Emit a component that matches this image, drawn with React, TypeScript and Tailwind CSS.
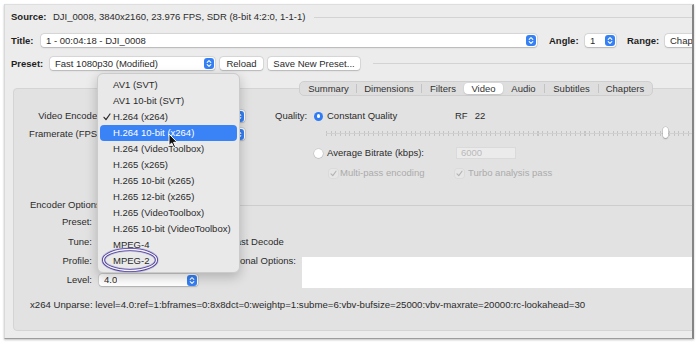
import React from "react";

function Stepper() {
  return (
    <span className="flex h-[11px] w-[10px] shrink-0 items-center justify-center rounded-[3px] bg-[#3580f5]">
      <svg width="6" height="9" viewBox="0 0 6 9" fill="none">
        <path
          d="M1.2 3.4 L3 1.6 L4.8 3.4 M1.2 5.6 L3 7.4 L4.8 5.6"
          stroke="#ffffff"
          strokeWidth="1.1"
          strokeLinecap="round"
          strokeLinejoin="round"
        />
      </svg>
    </span>
  );
}

function Popup({ text, className }: { text: string; className: string }) {
  return (
    <div
      className={
        "flex shrink-0 items-center justify-between rounded-[3px] bg-white pl-[5px] pr-[1px] shadow-[0_0_0_0.5px_rgba(0,0,0,0.12),0_0.5px_1.5px_rgba(0,0,0,0.18)] " +
        className
      }
    >
      <span className="truncate leading-[12px]">{text}</span>
      <Stepper />
    </div>
  );
}

function Btn({ text, className }: { text: string; className: string }) {
  return (
    <div
      className={
        "flex h-[13px] shrink-0 items-center justify-center rounded-[3px] bg-white shadow-[0_0_0_0.5px_rgba(0,0,0,0.12),0_0.5px_1.5px_rgba(0,0,0,0.18)] " +
        className
      }
    >
      {text}
    </div>
  );
}

function RadioOn() {
  return (
    <span className="flex h-[9px] w-[9px] shrink-0 items-center justify-center rounded-full bg-[#2f7cf6]">
      <span className="h-[3.5px] w-[3.5px] rounded-full bg-white" />
    </span>
  );
}

function RadioOff() {
  return (
    <span className="h-[9px] w-[9px] shrink-0 rounded-full bg-white shadow-[0_0_0_0.5px_rgba(0,0,0,0.15),0_0.5px_1px_rgba(0,0,0,0.15)]" />
  );
}

function CheckDisabled() {
  return (
    <span className="flex h-[9px] w-[9px] shrink-0 items-center justify-center rounded-[2px] bg-[#e6e6e6] shadow-[0_0_0_0.5px_rgba(0,0,0,0.06)]">
      <svg width="7" height="7" viewBox="0 0 7 7" fill="none">
        <path d="M1 3.8 L2.8 5.6 L6 1.2" stroke="#b3b3b3" strokeWidth="1.1" strokeLinecap="round" strokeLinejoin="round" />
      </svg>
    </span>
  );
}

function CheckBox() {
  return <span className="block h-[10px] w-[10px] shrink-0 rounded-[2px] bg-white shadow-[0_0_0_0.5px_rgba(0,0,0,0.2)]" />;
}

const menuItems = [
  "AV1 (SVT)",
  "AV1 10-bit (SVT)",
  "H.264 (x264)",
  "H.264 10-bit (x264)",
  "H.264 (VideoToolbox)",
  "H.265 (x265)",
  "H.265 10-bit (x265)",
  "H.265 12-bit (x265)",
  "H.265 (VideoToolbox)",
  "H.265 10-bit (VideoToolbox)",
  "MPEG-4",
  "MPEG-2",
];

export default function App() {
  return (
    <div className="h-[344px] w-[700px] overflow-hidden bg-white pl-[4px] pt-[4px] font-['Liberation_Sans',Arial,sans-serif] text-[9.5px] leading-none text-[#2b2b2b]">
      <div className="relative flex h-[335px] w-[690px] flex-col overflow-hidden border-b border-l border-r-2 border-t border-b-[#9c9c9c] border-l-[#d9d9d9] border-r-[#858585] border-t-[#dedede] bg-[#ececec] shadow-[0_1px_2px_rgba(0,0,0,0.25)]">
        {/* Source */}
        <div className="mt-[6px] flex h-[12px] shrink-0 items-center pl-[6px]">
          <span className="w-[42px] shrink-0 font-bold text-[#1e1e1e]">Source:</span>
          <span className="shrink-0 leading-[12px]">DJI_0008, 3840x2160, 23.976 FPS, SDR (8-bit 4:2:0, 1-1-1)</span>
          <span className="ml-[9px] h-px flex-1 bg-[#d3d3d3]" />
        </div>

        {/* Title */}
        <div className="mt-[11px] flex h-[13px] shrink-0 items-center pl-[6px]">
          <span className="w-[30px] shrink-0 font-bold text-[#1e1e1e]">Title:</span>
          <Popup text="1 - 00:04:18 - DJI_0008" className="h-[13px] w-[496px]" />
          <span className="ml-[12px] w-[36px] shrink-0 font-bold text-[#1e1e1e]">Angle:</span>
          <Popup text="1" className="h-[13px] w-[31px]" />
          <span className="ml-[11px] w-[38px] shrink-0 font-bold text-[#1e1e1e]">Range:</span>
          <div className="flex h-[13px] w-[60px] shrink-0 items-center rounded-[3px] bg-white pl-[5px] shadow-[0_0_0_0.5px_rgba(0,0,0,0.12),0_0.5px_1.5px_rgba(0,0,0,0.18)]">
            Chapters
          </div>
        </div>

        {/* Preset */}
        <div className="mt-[10px] flex h-[13px] shrink-0 items-center pl-[6px]">
          <span className="w-[39px] shrink-0 font-bold text-[#1e1e1e]">Preset:</span>
          <Popup text="Fast 1080p30 (Modified)" className="h-[13px] w-[165px]" />
          <Btn text="Reload" className="ml-[5px] w-[43px]" />
          <Btn text="Save New Preset..." className="ml-[5px] w-[92px]" />
          <span className="ml-[13px] h-px flex-1 bg-[#d3d3d3]" />
        </div>

        {/* Tabs */}
        <div className="relative z-10 ml-[294px] mt-[11px] flex h-[15px] w-[354px] shrink-0 items-center rounded-[5px] border border-[#cfcfcf] bg-[#dedede] p-[1px] text-[#333333]">
          <span className="flex w-[55px] justify-center">Summary</span>
          <span className="h-[9px] w-px bg-[#c3c3c3]" />
          <span className="flex w-[64px] justify-center">Dimensions</span>
          <span className="h-[9px] w-px bg-[#c3c3c3]" />
          <span className="flex w-[42px] justify-center">Filters</span>
          <span className="flex h-full w-[39px] items-center justify-center rounded-[4px] bg-white shadow-[0_0.5px_1.5px_rgba(0,0,0,0.2)]">
            Video
          </span>
          <span className="flex w-[41px] justify-center">Audio</span>
          <span className="h-[9px] w-px bg-[#c3c3c3]" />
          <span className="flex w-[53px] justify-center">Subtitles</span>
          <span className="h-[9px] w-px bg-[#c3c3c3]" />
          <span className="flex w-[52px] justify-center">Chapters</span>
        </div>

        {/* Content box */}
        <div className="mb-[7px] ml-[8px] -mt-[8px] flex w-[720px] flex-1 shrink-0 flex-col rounded-[4px] border border-[#d4d4d4] bg-[#e2e2e2]">
          {/* Upper section */}
          <div className="flex pt-[20px]">
            <div className="flex w-[231px] shrink-0 flex-col gap-[4px]">
              <div className="flex h-[14px] items-center">
                <span className="w-[89px] shrink-0 text-right">Video Encoder:</span>
                <Popup text="H.264 (x264)" className="ml-[3px] h-[12px] w-[139px]" />
              </div>
              <div className="flex h-[14px] items-center">
                <span className="w-[89px] shrink-0 text-right">Framerate (FPS):</span>
                <Popup text="Same as source" className="ml-[3px] h-[12px] w-[139px]" />
              </div>
            </div>

            <div className="ml-[30px] flex w-[440px] shrink-0 flex-col">
              <div className="flex h-[14px] items-center">
                <span className="w-[39px] shrink-0">Quality:</span>
                <div className="flex w-[141px] shrink-0 items-center">
                  <RadioOn />
                  <span className="ml-[4px]">Constant Quality</span>
                </div>
                <span>RF</span>
                <span className="ml-[7px]">22</span>
              </div>

              <div className="relative mt-[4px] flex h-[12px] items-center pl-[51px]">
                <div className="relative h-[5px] flex-1 bg-[repeating-linear-gradient(to_right,#c4c4c4_0_1px,transparent_1px_4.7px)]">
                  <span className="absolute left-0 right-0 top-[2px] h-px bg-[#d0d0d0]" />
                </div>
                <span className="absolute left-[388px] top-[0px] h-[11px] w-[5px] rounded-full bg-white shadow-[0_0_0_0.5px_rgba(0,0,0,0.15),0_1px_1.5px_rgba(0,0,0,0.25)]" />
              </div>

              <div className="mt-[7px] flex h-[14px] items-center pl-[39px]">
                <div className="flex w-[142px] shrink-0 items-center">
                  <RadioOff />
                  <span className="ml-[4px]">Average Bitrate (kbps):</span>
                </div>
                <div className="flex h-[12px] w-[60px] shrink-0 items-center border border-[#dadada] bg-[#ebebeb] pl-[4px] text-[#b9b9b9]">
                  6000
                </div>
              </div>

              <div className="mt-[7px] flex h-[12px] items-center pl-[54px] text-[#ababab]">
                <div className="flex w-[126px] shrink-0 items-center">
                  <CheckDisabled />
                  <span className="ml-[2px]">Multi-pass encoding</span>
                </div>
                <CheckDisabled />
                <span className="ml-[4px]">Turbo analysis pass</span>
              </div>
            </div>
          </div>

          {/* Encoder options */}
          <div className="mt-[20px] flex h-[12px] items-center pl-[16px]">
            <span className="shrink-0">Encoder Options:</span>
            <span className="ml-[6px] h-px flex-1 bg-[#cdcdcd]" />
          </div>

          <div className="mt-[5px] flex h-[12px] items-center">
            <span className="w-[78px] shrink-0 text-right">Preset:</span>
            <div className="ml-[7px] h-[3px] w-[130px] rounded-full bg-[#cfcfcf]" />
          </div>

          <div className="mt-[8px] flex h-[12px] items-center">
            <span className="w-[78px] shrink-0 text-right">Tune:</span>
            <Popup text="None" className="ml-[7px] h-[12px] w-[99px]" />
            <span className="ml-[18px]">
              <CheckBox />
            </span>
            <span className="ml-[4px]">Fast Decode</span>
          </div>

          <div className="mt-[7px] flex items-start">
            <div className="flex shrink-0 flex-col">
              <div className="flex h-[12px] items-center">
                <span className="w-[78px] shrink-0 text-right">Profile:</span>
                <Popup text="Auto" className="ml-[7px] h-[12px] w-[99px]" />
              </div>
              <div className="mt-[7px] flex h-[12px] items-center">
                <span className="w-[78px] shrink-0 text-right">Level:</span>
                <Popup text="4.0" className="ml-[7px] h-[12px] w-[99px]" />
              </div>
            </div>
            <span className="flex h-[12px] w-[98px] shrink-0 items-center justify-end">Additional Options:</span>
            <div className="ml-[6px] mt-[2px] h-[31px] w-[420px] shrink-0 bg-white" />
          </div>

          <div className="mt-[11px] flex h-[12px] items-center pl-[16px] text-[9.65px]">
            x264 Unparse: level=4.0:ref=1:bframes=0:8x8dct=0:weightp=1:subme=6:vbv-bufsize=25000:vbv-maxrate=20000:rc-lookahead=30
          </div>
        </div>

        {/* Dropdown menu */}
        <div className="absolute left-[92px] top-[68px] z-20 w-[143px] rounded-[6px] border border-[#cbcbcb] bg-[#e9e9e9] py-[3px] shadow-[0_4px_12px_rgba(0,0,0,0.22)]">
          {menuItems.map((item, i) => (
            <div
              key={item}
              className={
                i === 3
                  ? "mx-[2px] flex h-[16px] items-center rounded-[4px] bg-[#3a83f6] pl-[3px] text-white"
                  : "mx-[2px] flex h-[16px] items-center pl-[3px] text-[#2a2a2a]"
              }
            >
              <span className="flex w-[10px] shrink-0 items-center">
                {i === 2 ? (
                  <svg width="8" height="8" viewBox="0 0 8 8" fill="none">
                    <path d="M1 4.3 L3 6.6 L7 1" stroke="#2a2a2a" strokeWidth="1.2" strokeLinecap="round" strokeLinejoin="round" />
                  </svg>
                ) : null}
              </span>
              <span>{item}</span>
            </div>
          ))}
        </div>

        {/* Ellipse highlight */}
        <svg className="absolute left-[96px] top-[242px] z-30" width="58" height="26" viewBox="0 0 58 26" fill="none">
          <ellipse cx="29" cy="13" rx="26.5" ry="10.5" stroke="#7b6fc0" strokeWidth="4.5" opacity="0.35" />
          <ellipse cx="29" cy="13" rx="26.5" ry="10.5" stroke="#4d3f95" strokeWidth="3" />
          <ellipse cx="29" cy="13" rx="26.5" ry="10.5" stroke="#f4f2ff" strokeWidth="1.3" />
        </svg>

        {/* Cursor */}
        <svg className="absolute left-[163px] top-[128px] z-30" width="11" height="16" viewBox="0 0 11 16" fill="none">
          <path
            d="M1 1 L1 12.5 L3.7 10 L5.8 14.6 L7.6 13.8 L5.6 9.3 L9.2 9.3 Z"
            fill="#111111"
            stroke="#ffffff"
            strokeWidth="1"
            strokeLinejoin="round"
          />
        </svg>
      </div>
    </div>
  );
}
